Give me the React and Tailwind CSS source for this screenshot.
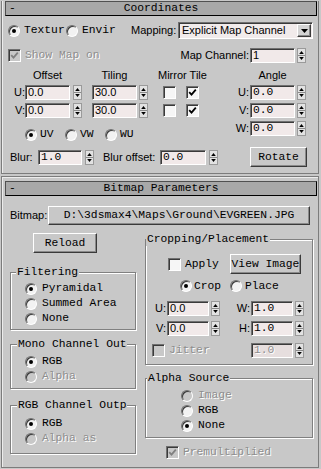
import React from "react";

const MONO = "font-['Liberation_Mono',monospace] text-[11.3px] leading-[13px] whitespace-nowrap";
const SANS = "font-['Liberation_Sans',Arial,sans-serif] text-[11px] leading-[13px] whitespace-nowrap";
const DIS = "text-[#8e8e8e] [text-shadow:1px_1px_0_#ffffff]";
const SUNK = "border border-t-[#707070] border-l-[#707070] border-b-white border-r-white shadow-[inset_1px_1px_0_#3a3a3a]";
const RAISED = "border border-t-white border-l-white border-b-[#3a3a3a] border-r-[#3a3a3a] shadow-[inset_-1px_-1px_0_#8a8a8a]";

const Radio = ({ on, off }) => (
  <span
    className={`flex w-[12px] h-[12px] shrink-0 items-center justify-center rounded-full ${SUNK} ${off ? "bg-[#c8c8c8]" : "bg-[#f2f2f2]"}`}
  >
    {on && <span className={`w-[4px] h-[4px] rounded-full ${off ? "bg-[#808080]" : "bg-black"}`} />}
  </span>
);

const Check = ({ on, off, className = "" }) => (
  <span
    className={`flex w-[13px] h-[13px] shrink-0 items-center justify-center ${SUNK} ${off ? "bg-[#c8c8c8]" : "bg-[#f6f6f6]"} ${className}`}
  >
    {on && (
      <svg width="9" height="9" viewBox="0 0 9 9">
        <path d="M1.2 4.2 L3.5 6.6 L7.8 1.6" fill="none" stroke={off ? "#808080" : "#000"} strokeWidth="1.8" />
      </svg>
    )}
  </span>
);

const Field = ({ v, mono, className = "" }) => (
  <div className={`flex items-center h-[15px] pl-[2px] bg-[#f1e9e9] ${SUNK} ${className}`}>
    <span className={mono ? MONO : SANS}>{v}</span>
  </div>
);

const Arrows = ({ className = "" }) => (
  <svg width="9" height="15" viewBox="0 0 9 15" className={`shrink-0 ${className}`}>
    <rect x="0.5" y="0.5" width="8" height="14" fill="#e2e2e2" stroke="#9a9a9a" />
    <path d="M4.5 3 L6.8 6 L2.2 6 Z" fill="#000" />
    <line x1="1" y1="7.5" x2="8" y2="7.5" stroke="#8a8a8a" />
    <path d="M2.2 9 L6.8 9 L4.5 12 Z" fill="#000" />
  </svg>
);

const Btn = ({ children, className = "" }) => (
  <div className={`flex items-center justify-center bg-[#c8c8c8] ${RAISED} ${MONO} ${className}`}>{children}</div>
);

const Opt = ({ on, off, label, className = "" }) => (
  <div className={`flex items-center h-[15px] gap-[5px] ${className}`}>
    <Radio on={on} off={off} />
    <span className={`${MONO} ${off ? DIS : "text-black"}`}>{label}</span>
  </div>
);

const Title = ({ text, className = "" }) => (
  <div
    className={`flex items-center h-[15px] border border-t-[#505050] border-l-[#505050] border-b-black border-r-black bg-[#a8a8a8] ${MONO} ${className}`}
  >
    <span className="w-[20px] pl-[3px]">-</span>
    <span className="flex-1 text-center">{text}</span>
    <span className="w-[20px]" />
  </div>
);

const Group = ({ label, className = "", legendClass = "", children }) => (
  <fieldset className={`border border-[#808080] shadow-[inset_1px_1px_0_#ffffff,1px_1px_0_#ffffff] ${className}`}>
    <legend className={`${MONO} px-[1px] bg-[#c8c8c8] ${legendClass}`}>{label}</legend>
    {children}
  </fieldset>
);

const Dropdown = () => (
  <div className={`flex items-center w-[135px] h-[17px] bg-[#f1ebeb] ${SUNK}`}>
    <span className={`${SANS} flex-1 pl-[3px]`}>Explicit Map Channel</span>
    <div className={`flex items-center justify-center w-[14px] h-[13px] mr-[1px] bg-[#d4d4d4] ${RAISED}`}>
      <svg width="7" height="4" viewBox="0 0 7 4">
        <path d="M0 0H7L3.5 4Z" fill="#000" />
      </svg>
    </div>
  </div>
);

const Coordinates = () => (
  <div className="ml-[1px] w-[318px] h-[173px] border border-t-0 border-[#7c7c7c] shadow-[inset_1px_0_0_#ececec]">
    <Title text="Coordinates" className="mt-[1px] ml-[3px] mr-[1px]" />

    <div className="flex items-center mt-[6px] h-[17px] pl-[6px]">
      <Radio on />
      <span className={`${MONO} ml-[4px] w-[42px] overflow-hidden`}>Textur</span>
      <Radio />
      <span className={`${MONO} ml-[4px] w-[49px]`}>Envir</span>
      <span className={`${SANS} w-[47px]`}>Mapping:</span>
      <Dropdown />
    </div>

    <div className="flex items-center mt-[9px] h-[15px] pl-[6px]">
      <Check on off />
      <span className={`${MONO} ${DIS} ml-[4px] w-[80px]`}>Show Map on</span>
      <span className={`${SANS} w-[144px] text-right`}>Map Channel:</span>
      <Field v="1" className="ml-[1px] w-[45px]" />
      <Arrows className="ml-[2px]" />
    </div>

    <div className={`flex items-center mt-[6px] h-[13px] pl-[23px] ${SANS}`}>
      <span className="w-[45px] text-center">Offset</span>
      <span className="ml-[22px] w-[45px] text-center">Tiling</span>
      <span className="w-[113px] pl-[21px]">Mirror Tile</span>
      <span className="w-[45px] text-center">Angle</span>
    </div>

    {[
      ["U:", "0.0", "30.0", "U:"],
      ["V:", "0.0", "30.0", "V:"],
    ].map(([a, off, tile, b]) => (
      <div key={a} className="flex items-center mt-[3px] h-[15px]">
        <span className={`${SANS} w-[23px] text-right`}>{a}</span>
        <Field v={off} className="w-[45px]" />
        <Arrows className="ml-[3px]" />
        <Field v={tile} className="ml-[10px] w-[45px]" />
        <Arrows className="ml-[2px]" />
        <Check className="ml-[15px]" />
        <Check on className="ml-[10px]" />
        <span className={`${SANS} w-[50px] text-right`}>{b}</span>
        <Field v="0.0" mono className="ml-[1px] w-[45px]" />
        <Arrows className="ml-[2px]" />
      </div>
    ))}

    <div className="flex items-start mt-[3px] h-[20px]">
      <div className="flex items-center w-[227px] h-[13px] mt-[7px] pl-[23px]">
        <Radio on />
        <span className={`${MONO} ml-[3px] w-[25px]`}>UV</span>
        <Radio />
        <span className={`${MONO} ml-[3px] w-[25px]`}>VW</span>
        <Radio />
        <span className={`${MONO} ml-[3px]`}>WU</span>
      </div>
      <span className={`${SANS} w-[20px] text-right leading-[15px]`}>W:</span>
      <Field v="0.0" mono className="ml-[1px] w-[45px]" />
      <Arrows className="ml-[2px]" />
    </div>

    <div className="flex items-center mt-[6px] h-[20px] pl-[8px]">
      <span className={`${SANS} w-[28px]`}>Blur:</span>
      <Field v="1.0" mono className="w-[44px]" />
      <Arrows className="ml-[3px]" />
      <span className={`${SANS} ml-[9px] w-[57px]`}>Blur offset:</span>
      <Field v="0.0" mono className="w-[46px]" />
      <Arrows className="ml-[3px]" />
      <Btn className="ml-[32px] w-[57px] h-[20px]">Rotate</Btn>
    </div>
  </div>
);

const BitmapParams = () => (
  <div className="mt-[2px] ml-[1px] w-[318px] h-[292px] border border-[#7c7c7c] shadow-[inset_1px_1px_0_#ececec]">
    <Title text="Bitmap Parameters" className="mt-[4px] ml-[3px] mr-[1px]" />

    <div className="flex items-center mt-[10px] h-[19px] pl-[8px]">
      <span className={`${SANS} w-[38px]`}>Bitmap:</span>
      <Btn className="w-[262px] h-[19px]">{"D:\\3dsmax4\\Maps\\Ground\\EVGREEN.JPG"}</Btn>
    </div>

    <div className="flex pl-[8px]">
      <div className="flex flex-col w-[126px]">
        <Btn className="mt-[8px] ml-[23px] w-[64px] h-[20px]">Reload</Btn>

        <Group label="Filtering" className="mt-[13px]" legendClass="ml-[5px]">
          <div className="pt-[2px] pb-[3px] pl-[14px]">
            <Opt on label="Pyramidal" />
            <Opt label="Summed Area" />
            <Opt label="None" />
          </div>
        </Group>

        <Group label="Mono Channel Out" className="mt-[8px]" legendClass="ml-[6px]">
          <div className="pt-[3px] pb-[4px] pl-[14px]">
            <Opt on label="RGB" />
            <Opt off label="Alpha" />
          </div>
        </Group>

        <Group label="RGB Channel Outp" className="mt-[10px]" legendClass="ml-[6px]">
          <div className="pt-[4px] pb-[7px] pl-[14px]">
            <Opt on label="RGB" />
            <Opt off label="Alpha as" />
          </div>
        </Group>
      </div>

      <div className="flex flex-col ml-[9px] w-[168px]">
        <Group label="Cropping/Placement" className="mt-[8px]" legendClass="ml-0">
          <div className="pb-[6px]">
            <div className="flex items-center mt-[8px] h-[20px] pl-[22px]">
              <Check />
              <span className={`${MONO} ml-[4px] w-[36px]`}>Apply</span>
              <Btn className="ml-[9px] w-[71px] h-[20px]">View Image</Btn>
            </div>
            <div className="flex items-center mt-[5px] h-[14px] pl-[34px]">
              <Radio on />
              <span className={`${MONO} ml-[2px] w-[28px]`}>Crop</span>
              <span className="ml-[8px]">
                <Radio />
              </span>
              <span className={`${MONO} ml-[3px]`}>Place</span>
            </div>
            {[
              ["U:", "W:", "mt-[8px]"],
              ["V:", "H:", "mt-[5px]"],
            ].map(([a, b, m]) => (
              <div key={a} className={`flex items-center h-[15px] ${m}`}>
                <span className={`${SANS} w-[20px] text-right`}>{a}</span>
                <Field v="0.0" className="ml-[1px] w-[42px]" />
                <Arrows className="ml-[2px]" />
                <span className={`${SANS} w-[30px] text-right`}>{b}</span>
                <Field v="1.0" mono className="ml-[1px] w-[42px]" />
                <Arrows className="ml-[2px]" />
              </div>
            ))}
            <div className="flex items-center mt-[7px] h-[15px] pl-[6px]">
              <Check off />
              <span className={`${MONO} ${DIS} ml-[4px] w-[82px]`}>Jitter</span>
              <div className={`flex items-center h-[15px] w-[42px] pl-[2px] bg-[#e6dede] ${SUNK}`}>
                <span className={`${MONO} ${DIS}`}>1.0</span>
              </div>
              <Arrows className="ml-[2px]" />
            </div>
          </div>
        </Group>

        <Group label="Alpha Source" className="mt-[7px]" legendClass="ml-[1px]">
          <div className="pt-[3px] pb-[4px] pl-[35px]">
            <Opt off label="Image" className="gap-[2px]" />
            <Opt label="RGB" className="gap-[2px]" />
            <Opt on label="None" className="gap-[2px]" />
          </div>
        </Group>

        <div className="flex items-center mt-[8px] h-[13px] pl-[21px]">
          <Check on off />
          <span className={`${MONO} ${DIS} ml-[4px]`}>Premultiplied</span>
        </div>
      </div>
    </div>
  </div>
);

export default function App() {
  return (
    <div className="w-[321px] h-[469px] bg-[#c8c8c8] overflow-hidden text-black">
      <Coordinates />
      <BitmapParams />
    </div>
  );
}
